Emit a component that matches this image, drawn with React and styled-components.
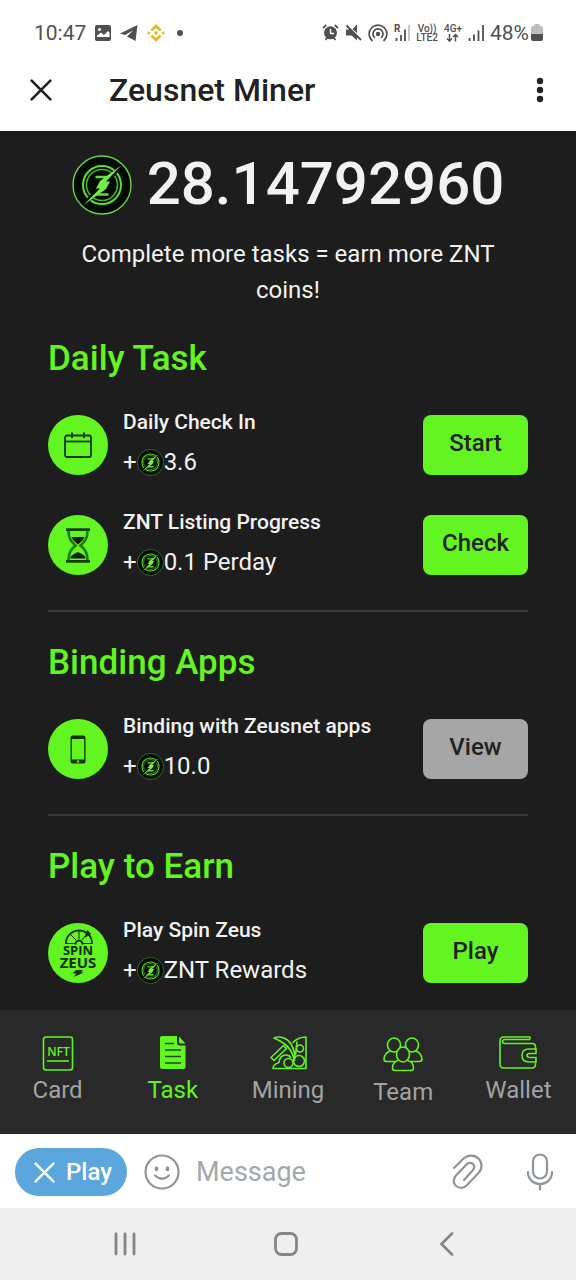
import React from 'react';
import styled, { createGlobalStyle } from 'styled-components';

const GREEN = '#62f522';
const INK = '#1d1d1d';

const GlobalStyle = createGlobalStyle`
  *, *::before, *::after { box-sizing: border-box; }
  body {
    margin: 0;
    background: ${INK};
    font-family: Roboto, "Liberation Sans", sans-serif;
  }
  h1, h2, h3, p { margin: 0; }
  button, input { font-family: inherit; }
  svg { display: block; flex: none; }
`;

const Page = styled.div`
  display: flex;
  flex-direction: column;
  min-height: 100vh;
`;

const StatusBar = styled.div`
  display: flex;
  align-items: center;
  justify-content: space-between;
  height: 50px;
  padding: 15px 33px 0 34px;
  background: #fff;
  color: #505050;
  font-size: 21px;
`;

const StatusGroup = styled.div`
  display: flex;
  align-items: center;
  gap: ${(p) => p.$gap}px;
`;

const TinyStack = styled.span`
  display: flex;
  flex-direction: column;
  align-items: center;
  font-size: 10px;
  line-height: 9px;
  font-weight: 500;
`;

const TitleBar = styled.header`
  display: flex;
  align-items: center;
  height: 81px;
  padding: 0 24px 2px 23px;
  background: #fff;
  color: #222;
`;

const IconButton = styled.button`
  display: flex;
  align-items: center;
  justify-content: center;
  width: ${(p) => p.$width || 36}px;
  height: 48px;
  padding: 0;
  border: 0;
  background: none;
  color: inherit;
`;

const MicButton = styled(IconButton)`
  margin-left: 36px;
`;

const AppTitle = styled.h1`
  flex: 1;
  margin-left: 50px;
  font-size: 32px;
  line-height: 40px;
  font-weight: 500;
`;

const Content = styled.main`
  flex: 1;
  padding: 24px 48px 0;
  background: ${INK};
  color: #f2f2f2;
`;

const Balance = styled.div`
  display: flex;
  align-items: center;
  justify-content: center;
  gap: 15px;
  height: 60px;
  font-size: 60px;
  line-height: 56px;
  font-weight: 500;

  span { padding-bottom: 2px; }
`;

const Intro = styled.p`
  margin: 21px 0 0;
  padding: 0 24px;
  font-size: 24px;
  line-height: 36px;
  text-align: center;
`;

const Section = styled.section`
  padding: 27px 0 30px;
  border-bottom: 2px solid #383838;

  &:last-child {
    padding-bottom: 22px;
    border-bottom: 0;
  }
`;

const SectionTitle = styled.h2`
  margin-bottom: 27px;
  color: ${GREEN};
  font-size: 35px;
  line-height: 48px;
  font-weight: 500;
`;

const TaskList = styled.div`
  display: flex;
  flex-direction: column;
  gap: 30px;
`;

const TaskRow = styled.div`
  display: flex;
  align-items: center;
  gap: 15px;
`;

const TaskIcon = styled.div`
  display: flex;
  align-items: center;
  justify-content: center;
  flex: none;
  width: 60px;
  height: 60px;
  border-radius: 50%;
  background: ${GREEN};
`;

const TaskText = styled.div`
  display: flex;
  flex-direction: column;
  flex: 1;
  gap: 10px;
`;

const TaskName = styled.h3`
  font-size: 21px;
  line-height: 24px;
  font-weight: 500;
`;

const Reward = styled.p`
  display: flex;
  align-items: center;
  font-size: 24px;
  line-height: 36px;
`;

const ActionButton = styled.button`
  flex: none;
  width: 105px;
  height: 60px;
  padding: 0 0 4px;
  border: 0;
  border-radius: 8px;
  background: ${(p) => (p.$muted ? '#a6a6a6' : GREEN)};
  color: #222;
  font-size: 24px;
  font-weight: 500;
`;

const TabBar = styled.nav`
  display: grid;
  grid-template-columns: repeat(5, 1fr);
  height: 124px;
  padding-top: 25px;
  background: #292929;
`;

const Tab = styled.a`
  display: flex;
  flex-direction: column;
  align-items: center;
  gap: 5px;
  color: ${(p) => (p.$active ? GREEN : '#a3a3a3')};
  font-size: 24px;
  line-height: 28px;
  text-decoration: none;

  svg { color: ${GREEN}; }
`;

const Composer = styled.div`
  display: flex;
  align-items: center;
  height: 74px;
  padding: 2px 18px 0 15px;
  background: #fff;
  color: #8f9499;
`;

const PlayPill = styled.button`
  display: flex;
  align-items: center;
  justify-content: center;
  gap: 11px;
  width: 112px;
  height: 48px;
  margin-right: 17px;
  padding: 0 0 0 4px;
  border: 0;
  border-radius: 24px;
  background: #5ca6de;
  color: #fff;
  font-size: 24px;
  font-weight: 500;
`;

const MessageInput = styled.input`
  flex: 1;
  min-width: 0;
  height: 48px;
  padding: 0;
  margin-left: 16px;
  border: 0;
  outline: 0;
  background: transparent;
  color: #222;
  font-size: 27px;

  &::placeholder { color: #a3a8ad; opacity: 1; }
`;

const SystemBar = styled.div`
  display: flex;
  align-items: center;
  justify-content: space-around;
  height: 72px;
  padding: 0 48px 0 44px;
  background: #efefef;
  color: #858585;
`;

function Coin({ size }) {
  const small = size < 40;
  return (
    <svg width={size} height={size} viewBox="0 0 60 60" fill="none" aria-hidden="true">
      <circle cx="30" cy="30" r="29" fill="#020a02" stroke={small ? '#4f8f3e' : '#6ccf50'} strokeWidth="1.400" />
      <circle cx="30" cy="30" r="19" stroke="#5fdc34" strokeWidth={small ? 2.4 : 2} />
      <circle cx="30" cy="30" r="15.500" stroke="#4cb82c" strokeWidth={small ? 1.6 : 1.5} />
      <path d="M23.500 22h13M23.500 39.500h13" stroke="#62e035" strokeWidth={small ? 3 : 2.4} />
      <path d="M48.500 11.500 12.500 49" stroke="#020a02" strokeWidth="4" />
      <path d="M49 10.500 28 26l-4 7.500h4L11.500 50 34 34l4-7.500h-4z" fill="#74ee42" />
    </svg>
  );
}

function CloseIcon({ size, width }) {
  return (
    <svg width={size} height={size} viewBox="0 0 20 20" fill="none" stroke="currentColor" strokeWidth={width} strokeLinecap="round" aria-hidden="true">
      <path d="m1.500 1.500 17 17m0-17-17 17" />
    </svg>
  );
}

function CalendarIcon() {
  return (
    <svg width="28" height="26" viewBox="0 0 28 26" fill="none" stroke="#14350a" strokeWidth="1.800" aria-hidden="true">
      <rect x="1" y="3.500" width="26" height="21.500" rx="2" />
      <path d="M1 9.500h26" />
      <path d="M8 .5v5.500M20 .5v5.500" strokeWidth="2" />
    </svg>
  );
}

function HourglassIcon() {
  return (
    <svg width="24" height="35" viewBox="0 0 24 35" fill="none" aria-hidden="true">
      <path d="M2.500 3c0 8 3 11 7 14.500-4 3.500-7 6.500-7 14.500M21.500 3c0 8-3 11-7 14.500 4 3.500 7 6.500 7 14.500" stroke="#1f7a0c" strokeWidth="2.600" />
      <path d="M5.500 9h13c-1 3.500-4 5-6.500 7.500-2.500-2.500-5.500-4-6.500-7.500zM4.500 30.500c0-3.500 4-4.500 7.500-6.500 3.500 2 7.500 3 7.500 6.500z" fill="#0c1f07" />
      <path d="M0 1.700h24M0 33.300h24" stroke="#12400a" strokeWidth="2.800" />
    </svg>
  );
}

function PhoneIcon() {
  return (
    <svg width="16" height="29" viewBox="0 0 16 29" fill="none" aria-hidden="true">
      <rect x=".5" y=".5" width="15" height="28" rx="2.500" fill="#143009" />
      <rect x="1.800" y="4" width="12.400" height="20.500" fill={GREEN} />
      <circle cx="8" cy="26.500" r="1.200" fill={GREEN} />
    </svg>
  );
}

function SpinZeusIcon() {
  return (
    <svg width="60" height="60" viewBox="0 0 60 60" fill="none" stroke="#102d08" aria-hidden="true">
      <path d="M18 21V20a13 12.500 0 0 1 26 0v1" strokeWidth="1.800" />
      <path d="M18 20.500h9M35 20.500h9M31 16V8M28 17l-6-6M34 17l4-5" strokeWidth="1" />
      <path d="M27.500 21.500a3.500 4 0 0 1 7 0" strokeWidth="2" />
      <path d="m39.500 7.500-2.500 6.500 5.500-3z" fill="#102d08" strokeWidth="1" />
      <g fill="#102d08" stroke="none" fontFamily="'Open Sans', sans-serif" fontWeight="700" textAnchor="middle">
        <text x="30" y="32" fontSize="13">SPIN</text>
        <text x="30" y="44.500" fontSize="15">ZEUS</text>
      </g>
      <path d="M28 47h7l-2 2.500h3l-10.500 4.500 3-3.500h-4z" fill="#102d08" stroke="none" />
    </svg>
  );
}

const tabIcon = { width: 40, height: 36, viewBox: '0 0 40 36', fill: 'none', stroke: 'currentColor', strokeWidth: 1.6, strokeLinejoin: 'round', 'aria-hidden': true };

const CardIcon = () => (
  <svg {...tabIcon}>
    <rect x="5.500" y="2" width="29" height="33" rx="2.500" />
    <path d="M9 26h22" />
    <text x="20.500" y="21" textAnchor="middle" fontSize="12" fontFamily="'Open Sans', sans-serif" fontWeight="600" fill="currentColor" stroke="none">NFT</text>
  </svg>
);

const TaskTabIcon = () => (
  <svg {...tabIcon}>
    <path d="M9 1h15v6.500a3 3 0 0 0 3 3h5.500V32a2 2 0 0 1-2 2H9a2 2 0 0 1-2-2V3a2 2 0 0 1 2-2z" fill="currentColor" stroke="none" />
    <path d="m26 1.500 6.500 7H27.500a1.500 1.500 0 0 1-1.500-1.500z" fill="currentColor" stroke="none" />
    <path d="M12 8.500h9M12 15h16M12 21.500h16M12 28h16" stroke="#1d4a12" strokeWidth="1.500" />
  </svg>
);

const MiningIcon = () => (
  <svg {...tabIcon}>
    <path d="M6 3c6-2.500 13 0 17 6 3 5 4.500 10 3.500 16-2-8-5.500-13-10.500-16.500C12.500 6 9.500 4.500 6 3z" />
    <path d="m15.500 10.500 3 3L6 25.500l-3-3z" />
    <path d="M24.500 8C28 4 32 2 38 2v31.500H5c0-3.500 2.500-5 6-6 .5-4.500 3-7.500 7-7.500 2.500 0 4 1 5 3" />
    <circle cx="32" cy="13.500" r="3.500" />
    <circle cx="31" cy="26" r="5.500" />
    <circle cx="20.500" cy="28" r="4.500" />
    <path d="M29 6.500 27.500 20" />
  </svg>
);

const TeamIcon = () => (
  <svg {...tabIcon} height="38" viewBox="0 0 40 38">
    <ellipse cx="11" cy="10" rx="6.500" ry="7" />
    <ellipse cx="29" cy="10" rx="6.500" ry="7" />
    <path d="M7.500 16C3.500 17 1.500 20 1 24q0 2.500 2.500 2.500H12M32.500 16c4 1 6 4 6.500 8q0 2.500-2.500 2.500H28" />
    <ellipse cx="20" cy="19.500" rx="6.500" ry="7.500" fill="#292929" />
    <path d="M15.500 25.500C11 26.500 9.500 29 9.500 33q0 2.500 2.500 2.500h16q2.500 0 2.500-2.500c0-4-1.500-6.500-6-7.500" />
  </svg>
);

const WalletIcon = () => (
  <svg {...tabIcon}>
    <path d="M32 4.500V2H6Q2 2 2 6v23q0 4 4 4h28q3.500 0 3.500-4v-1.500M37.500 14v-2q0-3.500-3.500-3.500H7Q4.500 8.500 4.500 6.500T7 4.500h25" />
    <path d="M38 14h-7q-7 0-7 6.500t7 6.500h7v-4.500h-6q-3 0-3-2t3-2h6z" />
  </svg>
);

const SignalIcon = () => (
  <svg width="16" height="16" viewBox="0 0 16 16" stroke="currentColor" strokeWidth="1.800" aria-hidden="true">
    <path d="M1.500 16v-3M6 16V9.500M10.500 16V5.500M15 16V0" />
  </svg>
);

function StatusIcons() {
  return (
    <StatusBar>
      <StatusGroup $gap={9}>
        <span>10:47</span>
        <svg width="16" height="16" viewBox="0 0 16 16" fill="none" aria-hidden="true">
          <rect width="16" height="16" rx="2" fill="currentColor" />
          <path d="m2 10.500 4-3 3 2.500 4-4 1.500 1.500v4.500H2z" fill="#fff" />
          <circle cx="4.500" cy="4.500" r="1.600" fill="#fff" />
        </svg>
        <svg width="18" height="16" viewBox="0 0 18 16" fill="currentColor" aria-hidden="true">
          <path d="M0 8.500 17.500 0 15.500 16 7 11.500 13 5.500 5 10z" />
        </svg>
        <svg width="18" height="18" viewBox="0 0 18 18" fill="none" aria-hidden="true">
          <path d="M4.500 6.500 9 2l4.500 4.500M4.500 11.500 9 16l4.500-4.500" stroke="#e2b92c" strokeWidth="2.800" />
          <path d="m9 6.800 2.200 2.200L9 11.200 6.800 9zM1.800 7.200 3.600 9l-1.800 1.800L0 9zM16.200 7.200 18 9l-1.800 1.800L14.400 9z" fill="#e2b92c" />
        </svg>
        <svg width="10" height="6" viewBox="0 0 10 6" fill="currentColor" aria-hidden="true">
          <circle cx="6" cy="3" r="3" />
        </svg>
      </StatusGroup>
      <StatusGroup $gap={6}>
        <svg width="17" height="17" viewBox="0 0 17 17" fill="none" stroke="currentColor" aria-hidden="true">
          <circle cx="8.500" cy="8.800" r="6.500" fill="currentColor" stroke="none" />
          <path d="M1 4.200 4.200 1M16 4.200 12.800 1M3.500 16l2-2.500M13.500 16l-2-2.500" strokeWidth="1.800" />
          <path d="M8.500 5v4.500H12" stroke="#fff" strokeWidth="1.400" />
        </svg>
        <svg width="17" height="17" viewBox="0 0 17 17" fill="currentColor" aria-hidden="true">
          <path d="M1 5.500h4l7 7V16.500L6.500 11.500H1zM12 .5v8.500L7.500 5z" />
          <path d="m1.500 1.500 14.500 14.500" stroke="currentColor" strokeWidth="2" />
        </svg>
        <svg width="20" height="18" viewBox="0 0 20 18" fill="none" stroke="currentColor" strokeWidth="1.700" strokeLinecap="round" aria-hidden="true">
          <circle cx="10" cy="10" r="2.200" fill="currentColor" stroke="none" />
          <path d="M4 16.500a8.900 8.900 0 1 1 12 0M6.500 13.500a5 5 0 1 1 7 0" />
        </svg>
        <svg width="16" height="17" viewBox="0 0 16 17" stroke="currentColor" strokeWidth="1.800" aria-hidden="true">
          <text x="0" y="8" fontSize="10" fontWeight="700" fill="currentColor" stroke="none">R</text>
          <path d="M2.500 17v-3M7 17v-6M11 17V5.500" />
          <path d="M15 17V1" opacity=".35" />
        </svg>
        <TinyStack>
          <span>Vo))</span>
          <span>LTE2</span>
        </TinyStack>
        <TinyStack>
          <span>4G+</span>
          <svg width="13" height="9" viewBox="0 0 13 9" fill="none" stroke="currentColor" strokeWidth="1.500" aria-hidden="true">
            <path d="M3.500 1v7M1 5.500 3.500 8 6 5.500M9.500 8.500V1.500M7 4l2.500-2.500L12 4" />
          </svg>
        </TinyStack>
        <SignalIcon />
        <StatusGroup $gap={2}>
          <span>48%</span>
          <svg width="12" height="17" viewBox="0 0 12 17" aria-hidden="true">
            <path d="M3.500 0h5v2H10a2 2 0 0 1 2 2v6H0V4a2 2 0 0 1 2-2h1.500z" fill="#bdbdbd" />
            <path d="M0 10h12v5a2 2 0 0 1-2 2H2a2 2 0 0 1-2-2z" fill="currentColor" />
          </svg>
        </StatusGroup>
      </StatusGroup>
    </StatusBar>
  );
}

const sections = [
  {
    title: 'Daily Task',
    tasks: [
      { name: 'Daily Check In', reward: '3.6', action: 'Start', Icon: CalendarIcon },
      { name: 'ZNT Listing Progress', reward: '0.1 Perday', action: 'Check', Icon: HourglassIcon },
    ],
  },
  {
    title: 'Binding Apps',
    tasks: [{ name: 'Binding with Zeusnet apps', reward: '10.0', action: 'View', muted: true, Icon: PhoneIcon }],
  },
  {
    title: 'Play to Earn',
    tasks: [{ name: 'Play Spin Zeus', reward: 'ZNT Rewards', action: 'Play', Icon: SpinZeusIcon }],
  },
];

const tabs = [
  { label: 'Card', Icon: CardIcon },
  { label: 'Task', Icon: TaskTabIcon, active: true },
  { label: 'Mining', Icon: MiningIcon },
  { label: 'Team', Icon: TeamIcon },
  { label: 'Wallet', Icon: WalletIcon },
];

export default function App() {
  return (
    <Page>
      <GlobalStyle />
      <StatusIcons />
      <TitleBar>
        <IconButton aria-label="Close"><CloseIcon size={22} width={2.4} /></IconButton>
        <AppTitle>Zeusnet Miner</AppTitle>
        <IconButton $width={24} aria-label="More options">
          <svg width="8" height="26" viewBox="0 0 8 26" fill="currentColor" aria-hidden="true">
            <circle cx="4" cy="4" r="3.200" />
            <circle cx="4" cy="13" r="3.200" />
            <circle cx="4" cy="22" r="3.200" />
          </svg>
        </IconButton>
      </TitleBar>

      <Content>
        <Balance>
          <Coin size={60} />
          <span>28.14792960</span>
        </Balance>
        <Intro>Complete more tasks = earn more ZNT coins!</Intro>
        {sections.map((section) => (
          <Section key={section.title}>
            <SectionTitle>{section.title}</SectionTitle>
            <TaskList>
              {section.tasks.map(({ name, reward, action, muted, Icon }) => (
                <TaskRow key={name}>
                  <TaskIcon><Icon /></TaskIcon>
                  <TaskText>
                    <TaskName>{name}</TaskName>
                    <Reward>
                      <span>+</span>
                      <Coin size={27} />
                      <span>{reward}</span>
                    </Reward>
                  </TaskText>
                  <ActionButton $muted={muted}>{action}</ActionButton>
                </TaskRow>
              ))}
            </TaskList>
          </Section>
        ))}
      </Content>

      <TabBar>
        {tabs.map(({ label, Icon, active }) => (
          <Tab key={label} href={`#${label.toLowerCase()}`} $active={active}>
            <Icon />
            <span>{label}</span>
          </Tab>
        ))}
      </TabBar>

      <Composer>
        <PlayPill>
          <CloseIcon size={21} width={2.4} />
          <span>Play</span>
        </PlayPill>
        <IconButton aria-label="Emoji">
          <svg width="36" height="36" viewBox="0 0 36 36" fill="none" stroke="currentColor" strokeWidth="2.200" strokeLinecap="round" aria-hidden="true">
            <circle cx="18" cy="18" r="16.500" />
            <path d="M11 21.500q7 6.500 14 0" />
            <ellipse cx="12.500" cy="14.800" rx="1.900" ry="2.500" fill="currentColor" stroke="none" />
            <ellipse cx="23.500" cy="14.800" rx="1.900" ry="2.500" fill="currentColor" stroke="none" />
          </svg>
        </IconButton>
        <MessageInput type="text" placeholder="Message" aria-label="Message" />
        <IconButton aria-label="Attach file">
          <svg width="32" height="36" viewBox="0 0 32 36" fill="none" stroke="currentColor" strokeWidth="2.200" strokeLinecap="round" strokeLinejoin="round" aria-hidden="true">
            <path d="m2 14 9-9C15.500.5 22.500.5 26.500 4.500s4 10.500 0 14.500L14.500 31.500c-3 3-7.500 3-10.500.5s-3-7.500 0-10.500L14.500 10.500c2-2 5-2 6.500-.5s1.500 4 0 6L12 26" />
          </svg>
        </IconButton>
        <MicButton aria-label="Record voice">
          <svg width="28" height="38" viewBox="0 0 28 38" fill="none" stroke="currentColor" strokeWidth="2.200" strokeLinecap="round" aria-hidden="true">
            <rect x="7" y="1.500" width="14" height="24" rx="7" />
            <path d="M2 19c0 7 5 12 12 12s12-5 12-12M14 31v5.500" />
          </svg>
        </MicButton>
      </Composer>

      <SystemBar>
        <IconButton aria-label="Recent apps">
          <svg width="24" height="24" viewBox="0 0 24 24" fill="none" stroke="currentColor" strokeWidth="2.800" strokeLinecap="round" aria-hidden="true">
            <path d="M3 2v20M12 2v20M21 2v20" />
          </svg>
        </IconButton>
        <IconButton aria-label="Home">
          <svg width="24" height="24" viewBox="0 0 24 24" fill="none" stroke="currentColor" strokeWidth="2.800" aria-hidden="true">
            <rect x="1.500" y="1.500" width="21" height="21" rx="6" />
          </svg>
        </IconButton>
        <IconButton aria-label="Back">
          <svg width="14" height="24" viewBox="0 0 14 24" fill="none" stroke="currentColor" strokeWidth="2.600" strokeLinecap="round" strokeLinejoin="round" aria-hidden="true">
            <path d="M12 1.500 1.500 12 12 22.500" />
          </svg>
        </IconButton>
      </SystemBar>
    </Page>
  );
}
